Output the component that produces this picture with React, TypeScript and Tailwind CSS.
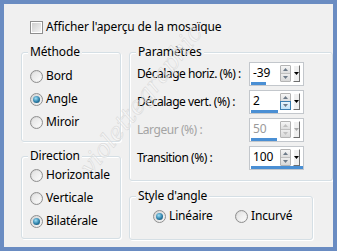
import React from "react";

function Radio({ checked }: { checked?: boolean }) {
  return (
    <div className="w-[13px] h-[13px] rounded-full border border-[#8f8f8f] bg-[linear-gradient(135deg,#d4d4d4,#f6f6f6)] flex items-center justify-center shrink-0">
      {checked ? (
        <div className="w-[7px] h-[7px] rounded-full bg-[radial-gradient(circle_at_40%_35%,#9fe0f8,#2c7fa8_55%,#0d3f5a)]" />
      ) : (
        <div className="w-[9px] h-[9px] rounded-full bg-[linear-gradient(135deg,#e2e2e2,#fbfbfb)]" />
      )}
    </div>
  );
}

function RadioRow({ label, checked }: { label: string; checked?: boolean }) {
  return (
    <div className="flex items-center h-[16px] gap-[3px]">
      <Radio checked={checked} />
      <span className="leading-[16px] whitespace-nowrap">{label}</span>
    </div>
  );
}

function Group({
  title,
  className,
  children,
}: {
  title: string;
  className: string;
  children: React.ReactNode;
}) {
  return (
    <div className={"border border-[#d5dfe5] rounded-[3px] shadow-[inset_1px_1px_0_#ffffff,1px_1px_0_#ffffff] flex flex-col " + className}>
      <div className="-mt-[9px] ml-[6px] px-[2px] h-[16px] leading-[16px] bg-[#f0f0f0] w-fit whitespace-nowrap">{title}</div>
      {children}
    </div>
  );
}

function Spin({
  value,
  bar,
  disabled,
  hoverDown,
}: {
  value: string;
  bar: string;
  disabled?: boolean;
  hoverDown?: boolean;
}) {
  return (
    <div className="w-[55px] h-[24px] shrink-0 border border-[#c3c7cc] bg-white flex flex-col">
      <div className="flex items-center h-[20px] pl-[3px] pr-[3px]">
        <span className={"flex-1 leading-[16px] " + (disabled ? "text-[#9a9a9a]" : "text-black")}>{value}</span>
        <div className="w-[11px] h-[17px] flex flex-col border border-[#b4b4b4] rounded-[1px] mt-[2px]">
          <div className="h-[8px] bg-[linear-gradient(#f6f6f6,#dedede)] flex items-center justify-center border-b border-[#c0c0c0]">
            <svg width="5" height="3" viewBox="0 0 5 3">
              <path d="M0 3 L2.5 0 L5 3 Z" fill={disabled ? "#c0c0c0" : "#6d7a88"} />
            </svg>
          </div>
          <div className={"flex-1 flex items-center justify-center " + (hoverDown ? "outline outline-1 outline-[#3c7fb1] bg-[linear-gradient(#e8f4fc,#c4e4f8)]" : "bg-[linear-gradient(#eeeeee,#d8d8d8)]")}>
            <svg width="5" height="3" viewBox="0 0 5 3">
              <path d="M0 0 L2.5 3 L5 0 Z" fill={disabled ? "#c0c0c0" : "#6d7a88"} />
            </svg>
          </div>
        </div>
        <div className="ml-[2px] w-[7px] h-[17px] mt-[2px] bg-[#f0f0f0] border-r border-b border-[#6e6e6e] border-l border-t border-l-white border-t-white flex items-center justify-center">
          <svg width="5" height="3" viewBox="0 0 5 3">
            <path d="M0 0 L2.5 3 L5 0 Z" fill={disabled ? "#a8a8a8" : "#000"} />
          </svg>
        </div>
      </div>
      <div className={"h-[3px] ml-[1px] bg-[#4a8fd4] " + bar} />
    </div>
  );
}

function ParamRow({
  label,
  value,
  bar,
  disabled,
  hoverDown,
}: {
  label: string;
  value: string;
  bar: string;
  disabled?: boolean;
  hoverDown?: boolean;
}) {
  return (
    <div className="flex items-center justify-between h-[24px]">
      <span className={"leading-[16px] whitespace-nowrap tracking-[-0.45px] " + (disabled ? "text-[#a4a4a4]" : "")}>{label}</span>
      <Spin value={value} bar={bar} disabled={disabled} hoverDown={hoverDown} />
    </div>
  );
}

export default function App() {
  return (
    <div className="relative w-[337px] h-[251px] overflow-hidden border-4 border-[#6a8cc2] bg-[#f0f0f0] text-[12px] tracking-[-0.15px] text-black font-['Noto_Sans',sans-serif]">
      <div className="flex items-center h-[16px] mt-[15px] ml-[26px] gap-[3px]">
        <div className="w-[13px] h-[13px] border border-[#8f8f8f] p-[1px] bg-white">
          <div className="w-full h-full bg-[linear-gradient(135deg,#cfcfcf,#f4f4f4)]" />
        </div>
        <span className="leading-[16px] whitespace-nowrap">Afficher l'aperçu de la mosaïque</span>
      </div>

      <div className="flex mt-[17px] ml-[17px] gap-[8px]">
        <div className="flex flex-col w-[100px] gap-[14px]">
          <Group title="Méthode" className="h-[90px]">
            <div className="flex flex-col gap-[7px] mt-[8px] pl-[8px]">
              <RadioRow label="Bord" />
              <RadioRow label="Angle" checked />
              <RadioRow label="Miroir" />
            </div>
          </Group>
          <Group title="Direction" className="h-[83px]">
            <div className="flex flex-col gap-[7px] mt-[3px] pl-[8px]">
              <RadioRow label="Horizontale" />
              <RadioRow label="Verticale" />
              <RadioRow label="Bilatérale" checked />
            </div>
          </Group>
        </div>

        <div className="flex flex-col gap-[15px]">
          <Group title="Paramètres" className="w-[204px] h-[129px]">
            <div className="flex flex-col gap-[4px] mt-[2px] pl-[7px] pr-[28px]">
              <ParamRow label="Décalage horiz. (%) :" value="-39" bar="w-[15px]" />
              <ParamRow label="Décalage vert. (%) :" value="2" bar="w-[27px]" hoverDown />
              <ParamRow label="Largeur (%) :" value="50" bar="w-[26px]" disabled />
              <ParamRow label="Transition (%) :" value="100" bar="w-[52px]" />
            </div>
          </Group>
          <Group title="Style d'angle" className="w-[184px] h-[44px]">
            <div className="flex items-center mt-[4px] pl-[23px]">
              <div className="w-[82px]">
                <RadioRow label="Linéaire" checked />
              </div>
              <RadioRow label="Incurvé" />
            </div>
          </Group>
        </div>
      </div>

      <div className="pointer-events-none absolute left-[46px] top-[78px] -rotate-[52deg] text-[24px] italic font-['DejaVu_Serif',serif] text-white/40 [-webkit-text-stroke:0.5px_#d6d6d6] whitespace-nowrap">
        violettegraphic
      </div>
    </div>
  );
}
